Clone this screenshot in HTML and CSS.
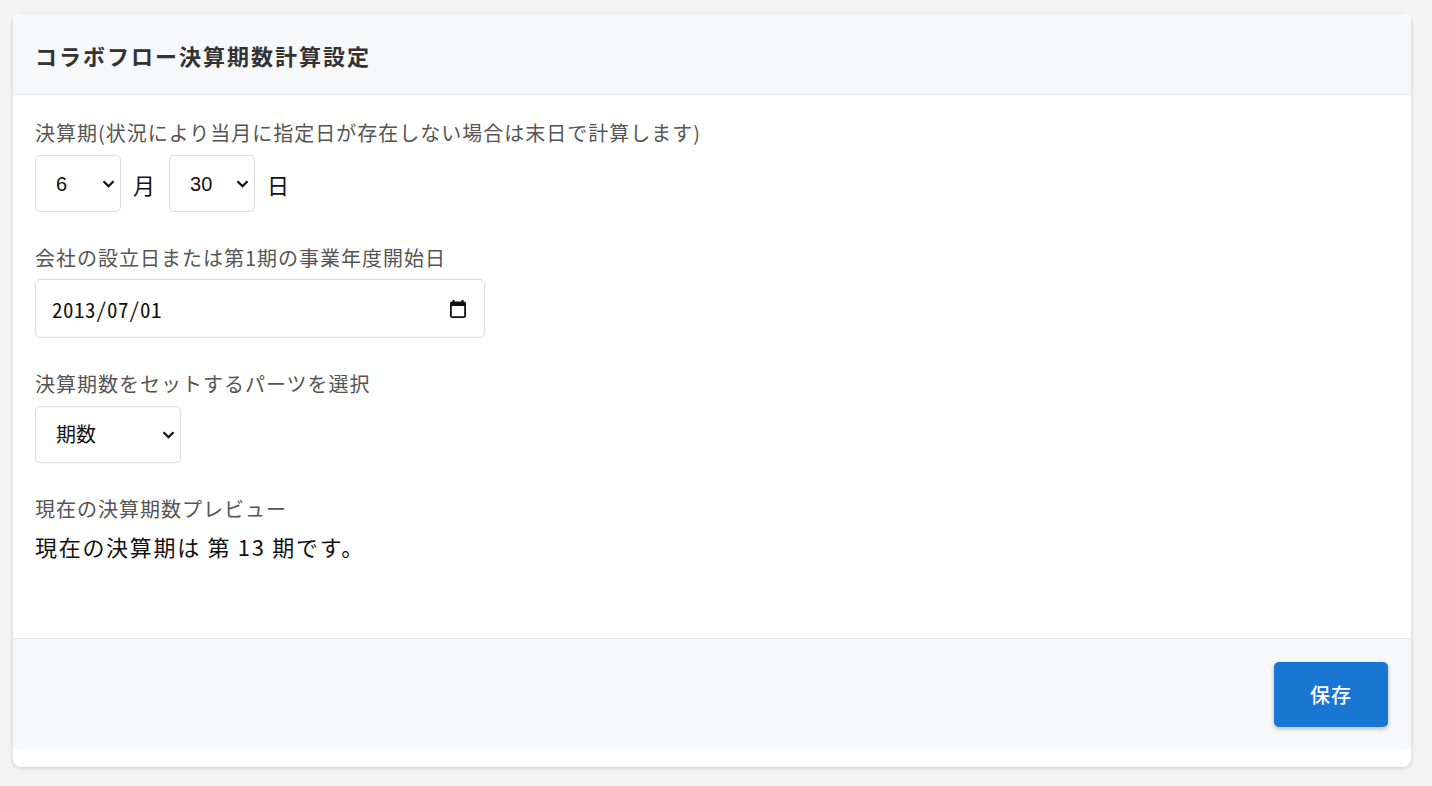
FILE: index.html
```html
<!DOCTYPE html>
<html lang="ja">
<head>
<meta charset="utf-8">
<title>コラボフロー決算期数計算設定</title>
<link rel="stylesheet" href="styles.css">
</head>
<body>
<div class="page">
  <div class="card">
    <div class="card-header">
      <h1 class="title">コラボフロー決算期数計算設定</h1>
    </div>
    <div class="card-body">
      <div class="field">
        <div class="label">決算期(状況により当月に指定日が存在しない場合は末日で計算します)</div>
        <div class="row">
          <div class="select-wrap select-sm">
            <select class="select"><option>6</option></select>
            <svg class="chev" width="13" height="8" viewBox="0 0 13 8"><path d="M1.5 1.2 6.5 6.2l5-5" fill="none" stroke="#111" stroke-width="2.3"/></svg>
          </div>
          <span class="unit">月</span>
          <div class="select-wrap select-sm">
            <select class="select"><option>30</option></select>
            <svg class="chev" width="13" height="8" viewBox="0 0 13 8"><path d="M1.5 1.2 6.5 6.2l5-5" fill="none" stroke="#111" stroke-width="2.3"/></svg>
          </div>
          <span class="unit">日</span>
        </div>
      </div>
      <div class="field">
        <div class="label">会社の設立日または第1期の事業年度開始日</div>
        <div class="date-input">
          <input class="date-text" type="text" value="2013/07/01" readonly>
          <svg class="cal" width="16" height="18" viewBox="0 0 16 18"><path d="M3.5 0v3M12.5 0v3" stroke="#111" stroke-width="2"/><rect x="0.9" y="2.4" width="14.2" height="14.7" rx="1.2" fill="none" stroke="#111" stroke-width="1.8"/><rect x="1" y="2.5" width="14" height="3.5" fill="#111"/></svg>
        </div>
      </div>
      <div class="field">
        <div class="label">決算期数をセットするパーツを選択</div>
        <div class="select-wrap select-md">
          <select class="select"><option>期数</option></select>
          <svg class="chev" width="13" height="8" viewBox="0 0 13 8"><path d="M1.5 1.2 6.5 6.2l5-5" fill="none" stroke="#111" stroke-width="2.3"/></svg>
        </div>
      </div>
      <div class="field field-last">
        <div class="label">現在の決算期数プレビュー</div>
        <div class="preview">現在の決算期は 第 13 期です。</div>
      </div>
    </div>
    <div class="card-footer">
      <button class="btn-save" type="button">保存</button>
    </div>
  </div>
</div>
</body>
</html>
```
FILE: styles.css
```css
* { box-sizing: border-box; }
html, body { margin: 0; padding: 0; }
body {
  background: #f3f3f3;
  font-family: "Noto Sans CJK JP", "Noto Sans", sans-serif;
  color: #222;
}
.page {
  padding: 14px 21px 19px 13px;
}
.card {
  background: #fff;
  border-radius: 8px;
  box-shadow: 0 1px 4px rgba(0,0,0,0.16);
  padding-bottom: 18px;
}
.card-header {
  background: #f7f8fa;
  height: 81px;
  border-bottom: 1px solid #e6e8eb;
  display: flex;
  align-items: center;
  padding: 2px 22px 0;
}
.title {
  margin: 0;
  font-size: 22px;
  font-weight: 700;
  letter-spacing: 2px;
  color: #333;
  line-height: 30px;
}
.card-body {
  padding: 24px 22px 77px;
}
.field { margin-bottom: 32px; }
.field-last { margin-bottom: 0; }
.label {
  font-size: 20px;
  line-height: 28px;
  letter-spacing: 1px;
  color: #555;
  margin-bottom: 8px;
}
.row {
  display: flex;
  align-items: center;
  gap: 12px;
}
.unit {
  font-size: 22px;
  color: #111;
  margin-right: 2px;
}
.select-wrap {
  position: relative;
  height: 57px;
}
.select-sm { width: 86px; }
.select-md { width: 146px; }
.select {
  appearance: none;
  -webkit-appearance: none;
  width: 100%;
  height: 100%;
  border: 1px solid #dcdcdc;
  border-radius: 5px;
  background: #fff;
  padding: 0 0 0 20px;
  font-family: "Liberation Sans", "Noto Sans CJK JP", sans-serif;
  font-size: 20px;
  color: #111;
}
.chev {
  position: absolute;
  right: 6px;
  top: 25px;
  pointer-events: none;
}
.date-input {
  width: 450px;
  height: 59px;
  margin-top: -1px;
  border: 1px solid #dcdcdc;
  border-radius: 5px;
  display: flex;
  align-items: center;
  padding: 0 18px 0 16px;
}
.date-text {
  flex: 1;
  border: 0;
  outline: none;
  background: transparent;
  padding: 0;
  font-family: "Noto Sans Mono CJK JP", "DejaVu Sans Mono", monospace;
  font-size: 21px;
  letter-spacing: 0.5px;
  color: #111;
}
.cal { display: block; }
.preview {
  font-size: 22px;
  line-height: 30px;
  letter-spacing: 1.7px;
  color: #111;
  margin-top: 4px;
}
.card-footer {
  background: #f7f8fa;
  border-top: 1px solid #e6e8eb;
  display: flex;
  justify-content: flex-end;
  padding: 23px 23px 22px;
}
.btn-save {
  width: 114px;
  height: 65px;
  border: 0;
  border-radius: 5px;
  background: #1976d2;
  color: #fff;
  font-family: "Noto Sans CJK JP", sans-serif;
  font-size: 20px;
  font-weight: 500;
  letter-spacing: 1px;
  box-shadow: 0 2px 4px rgba(0,0,0,0.25);
}
```
